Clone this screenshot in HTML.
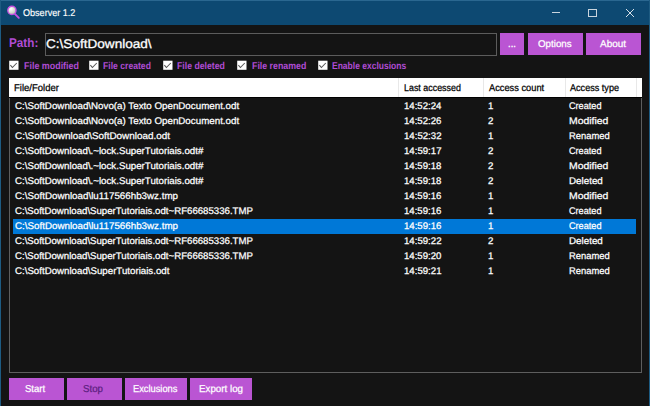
<!DOCTYPE html>
<html><head><meta charset="utf-8">
<style>
*{margin:0;padding:0;box-sizing:border-box}
html,body{width:650px;height:406px;overflow:hidden;background:#141414;font-family:"Liberation Sans",sans-serif;position:relative}
.a{position:absolute}
.t{position:absolute;white-space:nowrap;line-height:1;transform-origin:0 0;text-rendering:geometricPrecision}
.btn{position:absolute;background:#ba55d3}
.cb{position:absolute;width:10px;height:9px;background:#fff;top:61px}
.cb svg{position:absolute;left:0;top:0}
.dv{position:absolute;top:78px;width:1px;height:19px;background:#e8e8e8}
</style></head><body>
<!-- window border -->
<!-- title bar -->
<div class="a" style="left:0;top:0;width:650px;height:25px;background:#0d4972"></div>
<div class="a" style="left:0;top:0;width:650px;height:1px;background:#2a6790"></div>
<svg class="a" style="left:0;top:0" width="24" height="24" viewBox="0 0 24 24">
  <defs><radialGradient id="lens" cx="0.38" cy="0.32" r="0.7"><stop offset="0" stop-color="#ffffff"/><stop offset="0.45" stop-color="#e2e6dc"/><stop offset="1" stop-color="#b9c4b0"/></radialGradient></defs>
  <line x1="14.6" y1="13.6" x2="18.8" y2="17.8" stroke="#c64fe2" stroke-width="1.9" stroke-linecap="round"/>
  <circle cx="11.9" cy="10.4" r="4.1" fill="url(#lens)" stroke="#c64fe2" stroke-width="1.4"/>
</svg>
<div class="a" style="left:552px;top:12px;width:8px;height:1px;background:#c9d5de"></div>
<div class="a" style="left:588px;top:9px;width:9px;height:8px;border:1px solid #c9d5de"></div>
<svg class="a" style="left:625px;top:8px" width="10" height="10" viewBox="0 0 10 10">
  <line x1="1" y1="1" x2="9" y2="9" stroke="#d6e0e8" stroke-width="1"/>
  <line x1="9" y1="1" x2="1" y2="9" stroke="#d6e0e8" stroke-width="1"/>
</svg>

<div class="a" style="left:0;top:0;width:1px;height:406px;background:#1d5b82"></div>
<div class="a" style="left:649px;top:0;width:1px;height:406px;background:#1d5b82"></div>

<!-- path textbox -->
<div class="a" style="left:45px;top:33px;width:452px;height:23px;border:1px solid #5c5c5c;background:#141414"></div>

<!-- top buttons -->
<div class="btn" style="left:500px;top:33px;width:24px;height:22px"></div>
<div class="btn" style="left:528px;top:33px;width:55px;height:22px"></div>
<div class="btn" style="left:586px;top:33px;width:55px;height:22px"></div>

<!-- checkboxes -->
<svg class="a" style="left:8px;top:59px" width="13" height="13" viewBox="0 0 13 13"><rect x="1.2" y="1.7" width="9.3" height="9.1" fill="#fff"/><polyline points="2.4,6.1 4.4,8.5 8.8,4.0" fill="none" stroke="#585858" stroke-width="1.05"/></svg>
<svg class="a" style="left:88px;top:59px" width="13" height="13" viewBox="0 0 13 13"><rect x="1.2" y="1.7" width="9.3" height="9.1" fill="#fff"/><polyline points="2.4,6.1 4.4,8.5 8.8,4.0" fill="none" stroke="#585858" stroke-width="1.05"/></svg>
<svg class="a" style="left:162px;top:59px" width="13" height="13" viewBox="0 0 13 13"><rect x="1.2" y="1.7" width="9.3" height="9.1" fill="#fff"/><polyline points="2.4,6.1 4.4,8.5 8.8,4.0" fill="none" stroke="#585858" stroke-width="1.05"/></svg>
<svg class="a" style="left:236px;top:59px" width="13" height="13" viewBox="0 0 13 13"><rect x="1.2" y="1.7" width="9.3" height="9.1" fill="#fff"/><polyline points="2.4,6.1 4.4,8.5 8.8,4.0" fill="none" stroke="#585858" stroke-width="1.05"/></svg>
<svg class="a" style="left:317px;top:59px" width="13" height="13" viewBox="0 0 13 13"><rect x="1.2" y="1.7" width="9.3" height="9.1" fill="#fff"/><polyline points="2.4,6.1 4.4,8.5 8.8,4.0" fill="none" stroke="#585858" stroke-width="1.05"/></svg>

<!-- list -->
<div class="a" style="left:9px;top:97px;width:633px;height:276px;border:1px solid #5e5e5e;border-top:none;background:#141414"></div>
<div class="a" style="left:9px;top:78px;width:633px;height:19px;background:#fff"></div>
<div class="a" style="left:9px;top:97px;width:633px;height:1px;background:#000"></div>
<div class="dv" style="left:398px"></div>
<div class="dv" style="left:483px"></div>
<div class="dv" style="left:565px"></div>
<div class="dv" style="left:636px"></div>
<div class="a" style="left:13px;top:218.5px;width:623px;height:15px;background:#0078d7"></div>

<!-- bottom buttons -->
<div class="btn" style="left:9px;top:378px;width:55px;height:22px"></div>
<div class="btn" style="left:67px;top:378px;width:55px;height:22px"></div>
<div class="btn" style="left:125px;top:378px;width:62px;height:22px"></div>
<div class="btn" style="left:190px;top:378px;width:62px;height:22px"></div>

<div class="t" style="left:23.04px;top:8.90px;font-size:9.8px;font-weight:400;color:#ffffff;transform:scaleX(0.9247);-webkit-text-stroke:0.15px #fff;">Observer 1.2</div>
<div class="t" style="left:8.80px;top:36.93px;font-size:12.6px;font-weight:700;color:#b04cd4;transform:scaleX(0.9299);">Path:</div>
<div class="t" style="left:46.32px;top:38.22px;font-size:12.5px;font-weight:400;color:#ffffff;transform:scaleX(1.0861);-webkit-text-stroke:0.3px #fff;">C:\SoftDownload\</div>
<div class="t" style="left:507.84px;top:39.53px;font-size:10px;font-weight:400;color:#ffffff;transform:scaleX(0.9609);-webkit-text-stroke:0.3px #fff;">...</div>
<div class="t" style="left:538.21px;top:40.10px;font-size:9.8px;font-weight:400;color:#ffffff;transform:scaleX(0.9974);-webkit-text-stroke:0.25px #fff;">Options</div>
<div class="t" style="left:600.00px;top:40.10px;font-size:9.8px;font-weight:400;color:#ffffff;transform:scaleX(1.0144);-webkit-text-stroke:0.25px #fff;">About</div>
<div class="t" style="left:23.66px;top:61.62px;font-size:9.9px;font-weight:700;color:#b04cd4;transform:scaleX(0.9022);">File modified</div>
<div class="t" style="left:103.48px;top:61.62px;font-size:9.9px;font-weight:700;color:#b04cd4;transform:scaleX(0.8731);">File created</div>
<div class="t" style="left:177.48px;top:61.62px;font-size:9.9px;font-weight:700;color:#b04cd4;transform:scaleX(0.8823);">File deleted</div>
<div class="t" style="left:251.67px;top:61.62px;font-size:9.9px;font-weight:700;color:#b04cd4;transform:scaleX(0.8918);">File renamed</div>
<div class="t" style="left:331.99px;top:61.62px;font-size:9.9px;font-weight:700;color:#b04cd4;transform:scaleX(0.8603);">Enable exclusions</div>
<div class="t" style="left:13.84px;top:84.10px;font-size:9.8px;font-weight:400;color:#000000;transform:scaleX(0.9696);-webkit-text-stroke:0.25px #000;">File/Folder</div>
<div class="t" style="left:403.59px;top:84.10px;font-size:9.8px;font-weight:400;color:#000000;transform:scaleX(0.9085);-webkit-text-stroke:0.25px #000;">Last accessed</div>
<div class="t" style="left:488.50px;top:84.10px;font-size:9.8px;font-weight:400;color:#000000;transform:scaleX(0.9468);-webkit-text-stroke:0.25px #000;">Access count</div>
<div class="t" style="left:569.80px;top:84.10px;font-size:9.8px;font-weight:400;color:#000000;transform:scaleX(0.9280);-webkit-text-stroke:0.25px #000;">Access type</div>
<div class="t" style="left:14.51px;top:101.57px;font-size:9.6px;font-weight:400;color:#ffffff;transform:scaleX(1.0186);-webkit-text-stroke:0.25px #fff;">C:\SoftDownload\Novo(a) Texto OpenDocument.odt</div>
<div class="t" style="left:403.53px;top:101.57px;font-size:9.6px;font-weight:400;color:#ffffff;transform:scaleX(0.9987);-webkit-text-stroke:0.25px #fff;">14:52:24</div>
<div class="t" style="left:487.92px;top:101.57px;font-size:9.6px;font-weight:400;color:#ffffff;transform:scaleX(1.0067);-webkit-text-stroke:0.25px #fff;">1</div>
<div class="t" style="left:569.04px;top:101.57px;font-size:9.6px;font-weight:400;color:#ffffff;transform:scaleX(0.9507);-webkit-text-stroke:0.25px #fff;">Created</div>
<div class="t" style="left:14.51px;top:116.57px;font-size:9.6px;font-weight:400;color:#ffffff;transform:scaleX(1.0186);-webkit-text-stroke:0.25px #fff;">C:\SoftDownload\Novo(a) Texto OpenDocument.odt</div>
<div class="t" style="left:403.53px;top:116.57px;font-size:9.6px;font-weight:400;color:#ffffff;transform:scaleX(1.0014);-webkit-text-stroke:0.25px #fff;">14:52:26</div>
<div class="t" style="left:488.12px;top:116.57px;font-size:9.6px;font-weight:400;color:#ffffff;transform:scaleX(1.0067);-webkit-text-stroke:0.25px #fff;">2</div>
<div class="t" style="left:568.67px;top:116.57px;font-size:9.6px;font-weight:400;color:#ffffff;transform:scaleX(1.0864);-webkit-text-stroke:0.25px #fff;">Modified</div>
<div class="t" style="left:14.51px;top:131.57px;font-size:9.6px;font-weight:400;color:#ffffff;transform:scaleX(1.0298);-webkit-text-stroke:0.25px #fff;">C:\SoftDownload\SoftDownload.odt</div>
<div class="t" style="left:403.53px;top:131.57px;font-size:9.6px;font-weight:400;color:#ffffff;transform:scaleX(1.0040);-webkit-text-stroke:0.25px #fff;">14:52:32</div>
<div class="t" style="left:487.92px;top:131.57px;font-size:9.6px;font-weight:400;color:#ffffff;transform:scaleX(1.0067);-webkit-text-stroke:0.25px #fff;">1</div>
<div class="t" style="left:568.75px;top:131.57px;font-size:9.6px;font-weight:400;color:#ffffff;transform:scaleX(0.9797);-webkit-text-stroke:0.25px #fff;">Renamed</div>
<div class="t" style="left:14.51px;top:146.57px;font-size:9.6px;font-weight:400;color:#ffffff;transform:scaleX(1.0124);-webkit-text-stroke:0.25px #fff;">C:\SoftDownload\.~lock.SuperTutoriais.odt#</div>
<div class="t" style="left:403.53px;top:146.57px;font-size:9.6px;font-weight:400;color:#ffffff;transform:scaleX(1.0040);-webkit-text-stroke:0.25px #fff;">14:59:17</div>
<div class="t" style="left:488.12px;top:146.57px;font-size:9.6px;font-weight:400;color:#ffffff;transform:scaleX(1.0067);-webkit-text-stroke:0.25px #fff;">2</div>
<div class="t" style="left:569.04px;top:146.57px;font-size:9.6px;font-weight:400;color:#ffffff;transform:scaleX(0.9507);-webkit-text-stroke:0.25px #fff;">Created</div>
<div class="t" style="left:14.51px;top:161.57px;font-size:9.6px;font-weight:400;color:#ffffff;transform:scaleX(1.0124);-webkit-text-stroke:0.25px #fff;">C:\SoftDownload\.~lock.SuperTutoriais.odt#</div>
<div class="t" style="left:403.53px;top:161.57px;font-size:9.6px;font-weight:400;color:#ffffff;transform:scaleX(1.0014);-webkit-text-stroke:0.25px #fff;">14:59:18</div>
<div class="t" style="left:488.12px;top:161.57px;font-size:9.6px;font-weight:400;color:#ffffff;transform:scaleX(1.0067);-webkit-text-stroke:0.25px #fff;">2</div>
<div class="t" style="left:568.67px;top:161.57px;font-size:9.6px;font-weight:400;color:#ffffff;transform:scaleX(1.0864);-webkit-text-stroke:0.25px #fff;">Modified</div>
<div class="t" style="left:14.51px;top:176.57px;font-size:9.6px;font-weight:400;color:#ffffff;transform:scaleX(1.0124);-webkit-text-stroke:0.25px #fff;">C:\SoftDownload\.~lock.SuperTutoriais.odt#</div>
<div class="t" style="left:403.53px;top:176.57px;font-size:9.6px;font-weight:400;color:#ffffff;transform:scaleX(1.0014);-webkit-text-stroke:0.25px #fff;">14:59:18</div>
<div class="t" style="left:488.12px;top:176.57px;font-size:9.6px;font-weight:400;color:#ffffff;transform:scaleX(1.0067);-webkit-text-stroke:0.25px #fff;">2</div>
<div class="t" style="left:568.71px;top:176.57px;font-size:9.6px;font-weight:400;color:#ffffff;transform:scaleX(1.0226);-webkit-text-stroke:0.25px #fff;">Deleted</div>
<div class="t" style="left:14.51px;top:191.57px;font-size:9.6px;font-weight:400;color:#ffffff;transform:scaleX(1.0202);-webkit-text-stroke:0.25px #fff;">C:\SoftDownload\lu117566hb3wz.tmp</div>
<div class="t" style="left:403.53px;top:191.57px;font-size:9.6px;font-weight:400;color:#ffffff;transform:scaleX(1.0014);-webkit-text-stroke:0.25px #fff;">14:59:16</div>
<div class="t" style="left:487.92px;top:191.57px;font-size:9.6px;font-weight:400;color:#ffffff;transform:scaleX(1.0067);-webkit-text-stroke:0.25px #fff;">1</div>
<div class="t" style="left:568.67px;top:191.57px;font-size:9.6px;font-weight:400;color:#ffffff;transform:scaleX(1.0864);-webkit-text-stroke:0.25px #fff;">Modified</div>
<div class="t" style="left:14.52px;top:206.57px;font-size:9.6px;font-weight:400;color:#ffffff;transform:scaleX(1.0055);-webkit-text-stroke:0.25px #fff;">C:\SoftDownload\SuperTutoriais.odt~RF66685336.TMP</div>
<div class="t" style="left:403.53px;top:206.57px;font-size:9.6px;font-weight:400;color:#ffffff;transform:scaleX(1.0014);-webkit-text-stroke:0.25px #fff;">14:59:16</div>
<div class="t" style="left:487.92px;top:206.57px;font-size:9.6px;font-weight:400;color:#ffffff;transform:scaleX(1.0067);-webkit-text-stroke:0.25px #fff;">1</div>
<div class="t" style="left:569.04px;top:206.57px;font-size:9.6px;font-weight:400;color:#ffffff;transform:scaleX(0.9507);-webkit-text-stroke:0.25px #fff;">Created</div>
<div class="t" style="left:14.51px;top:221.57px;font-size:9.6px;font-weight:400;color:#ffffff;transform:scaleX(1.0202);-webkit-text-stroke:0.25px #fff;">C:\SoftDownload\lu117566hb3wz.tmp</div>
<div class="t" style="left:403.53px;top:221.57px;font-size:9.6px;font-weight:400;color:#ffffff;transform:scaleX(1.0014);-webkit-text-stroke:0.25px #fff;">14:59:16</div>
<div class="t" style="left:487.92px;top:221.57px;font-size:9.6px;font-weight:400;color:#ffffff;transform:scaleX(1.0067);-webkit-text-stroke:0.25px #fff;">1</div>
<div class="t" style="left:569.04px;top:221.57px;font-size:9.6px;font-weight:400;color:#ffffff;transform:scaleX(0.9507);-webkit-text-stroke:0.25px #fff;">Created</div>
<div class="t" style="left:14.52px;top:236.57px;font-size:9.6px;font-weight:400;color:#ffffff;transform:scaleX(1.0055);-webkit-text-stroke:0.25px #fff;">C:\SoftDownload\SuperTutoriais.odt~RF66685336.TMP</div>
<div class="t" style="left:403.53px;top:236.57px;font-size:9.6px;font-weight:400;color:#ffffff;transform:scaleX(1.0040);-webkit-text-stroke:0.25px #fff;">14:59:22</div>
<div class="t" style="left:488.12px;top:236.57px;font-size:9.6px;font-weight:400;color:#ffffff;transform:scaleX(1.0067);-webkit-text-stroke:0.25px #fff;">2</div>
<div class="t" style="left:568.71px;top:236.57px;font-size:9.6px;font-weight:400;color:#ffffff;transform:scaleX(1.0226);-webkit-text-stroke:0.25px #fff;">Deleted</div>
<div class="t" style="left:14.52px;top:251.57px;font-size:9.6px;font-weight:400;color:#ffffff;transform:scaleX(1.0055);-webkit-text-stroke:0.25px #fff;">C:\SoftDownload\SuperTutoriais.odt~RF66685336.TMP</div>
<div class="t" style="left:403.53px;top:251.57px;font-size:9.6px;font-weight:400;color:#ffffff;transform:scaleX(1.0014);-webkit-text-stroke:0.25px #fff;">14:59:20</div>
<div class="t" style="left:487.92px;top:251.57px;font-size:9.6px;font-weight:400;color:#ffffff;transform:scaleX(1.0067);-webkit-text-stroke:0.25px #fff;">1</div>
<div class="t" style="left:568.75px;top:251.57px;font-size:9.6px;font-weight:400;color:#ffffff;transform:scaleX(0.9797);-webkit-text-stroke:0.25px #fff;">Renamed</div>
<div class="t" style="left:14.51px;top:266.57px;font-size:9.6px;font-weight:400;color:#ffffff;transform:scaleX(1.0110);-webkit-text-stroke:0.25px #fff;">C:\SoftDownload\SuperTutoriais.odt</div>
<div class="t" style="left:403.53px;top:266.57px;font-size:9.6px;font-weight:400;color:#ffffff;transform:scaleX(1.0040);-webkit-text-stroke:0.25px #fff;">14:59:21</div>
<div class="t" style="left:487.92px;top:266.57px;font-size:9.6px;font-weight:400;color:#ffffff;transform:scaleX(1.0067);-webkit-text-stroke:0.25px #fff;">1</div>
<div class="t" style="left:568.75px;top:266.57px;font-size:9.6px;font-weight:400;color:#ffffff;transform:scaleX(0.9797);-webkit-text-stroke:0.25px #fff;">Renamed</div>
<div class="t" style="left:25.22px;top:384.74px;font-size:10px;font-weight:400;color:#ffffff;transform:scaleX(0.9547);-webkit-text-stroke:0.25px #ffffff;">Start</div>
<div class="t" style="left:83.41px;top:384.74px;font-size:10px;font-weight:400;color:#5c1f80;transform:scaleX(0.9692);-webkit-text-stroke:0.25px #5c1f80;">Stop</div>
<div class="t" style="left:133.46px;top:384.74px;font-size:10px;font-weight:400;color:#ffffff;transform:scaleX(0.9294);-webkit-text-stroke:0.25px #ffffff;">Exclusions</div>
<div class="t" style="left:198.72px;top:384.74px;font-size:10px;font-weight:400;color:#ffffff;transform:scaleX(0.9779);-webkit-text-stroke:0.25px #ffffff;">Export log</div>
</body></html>
